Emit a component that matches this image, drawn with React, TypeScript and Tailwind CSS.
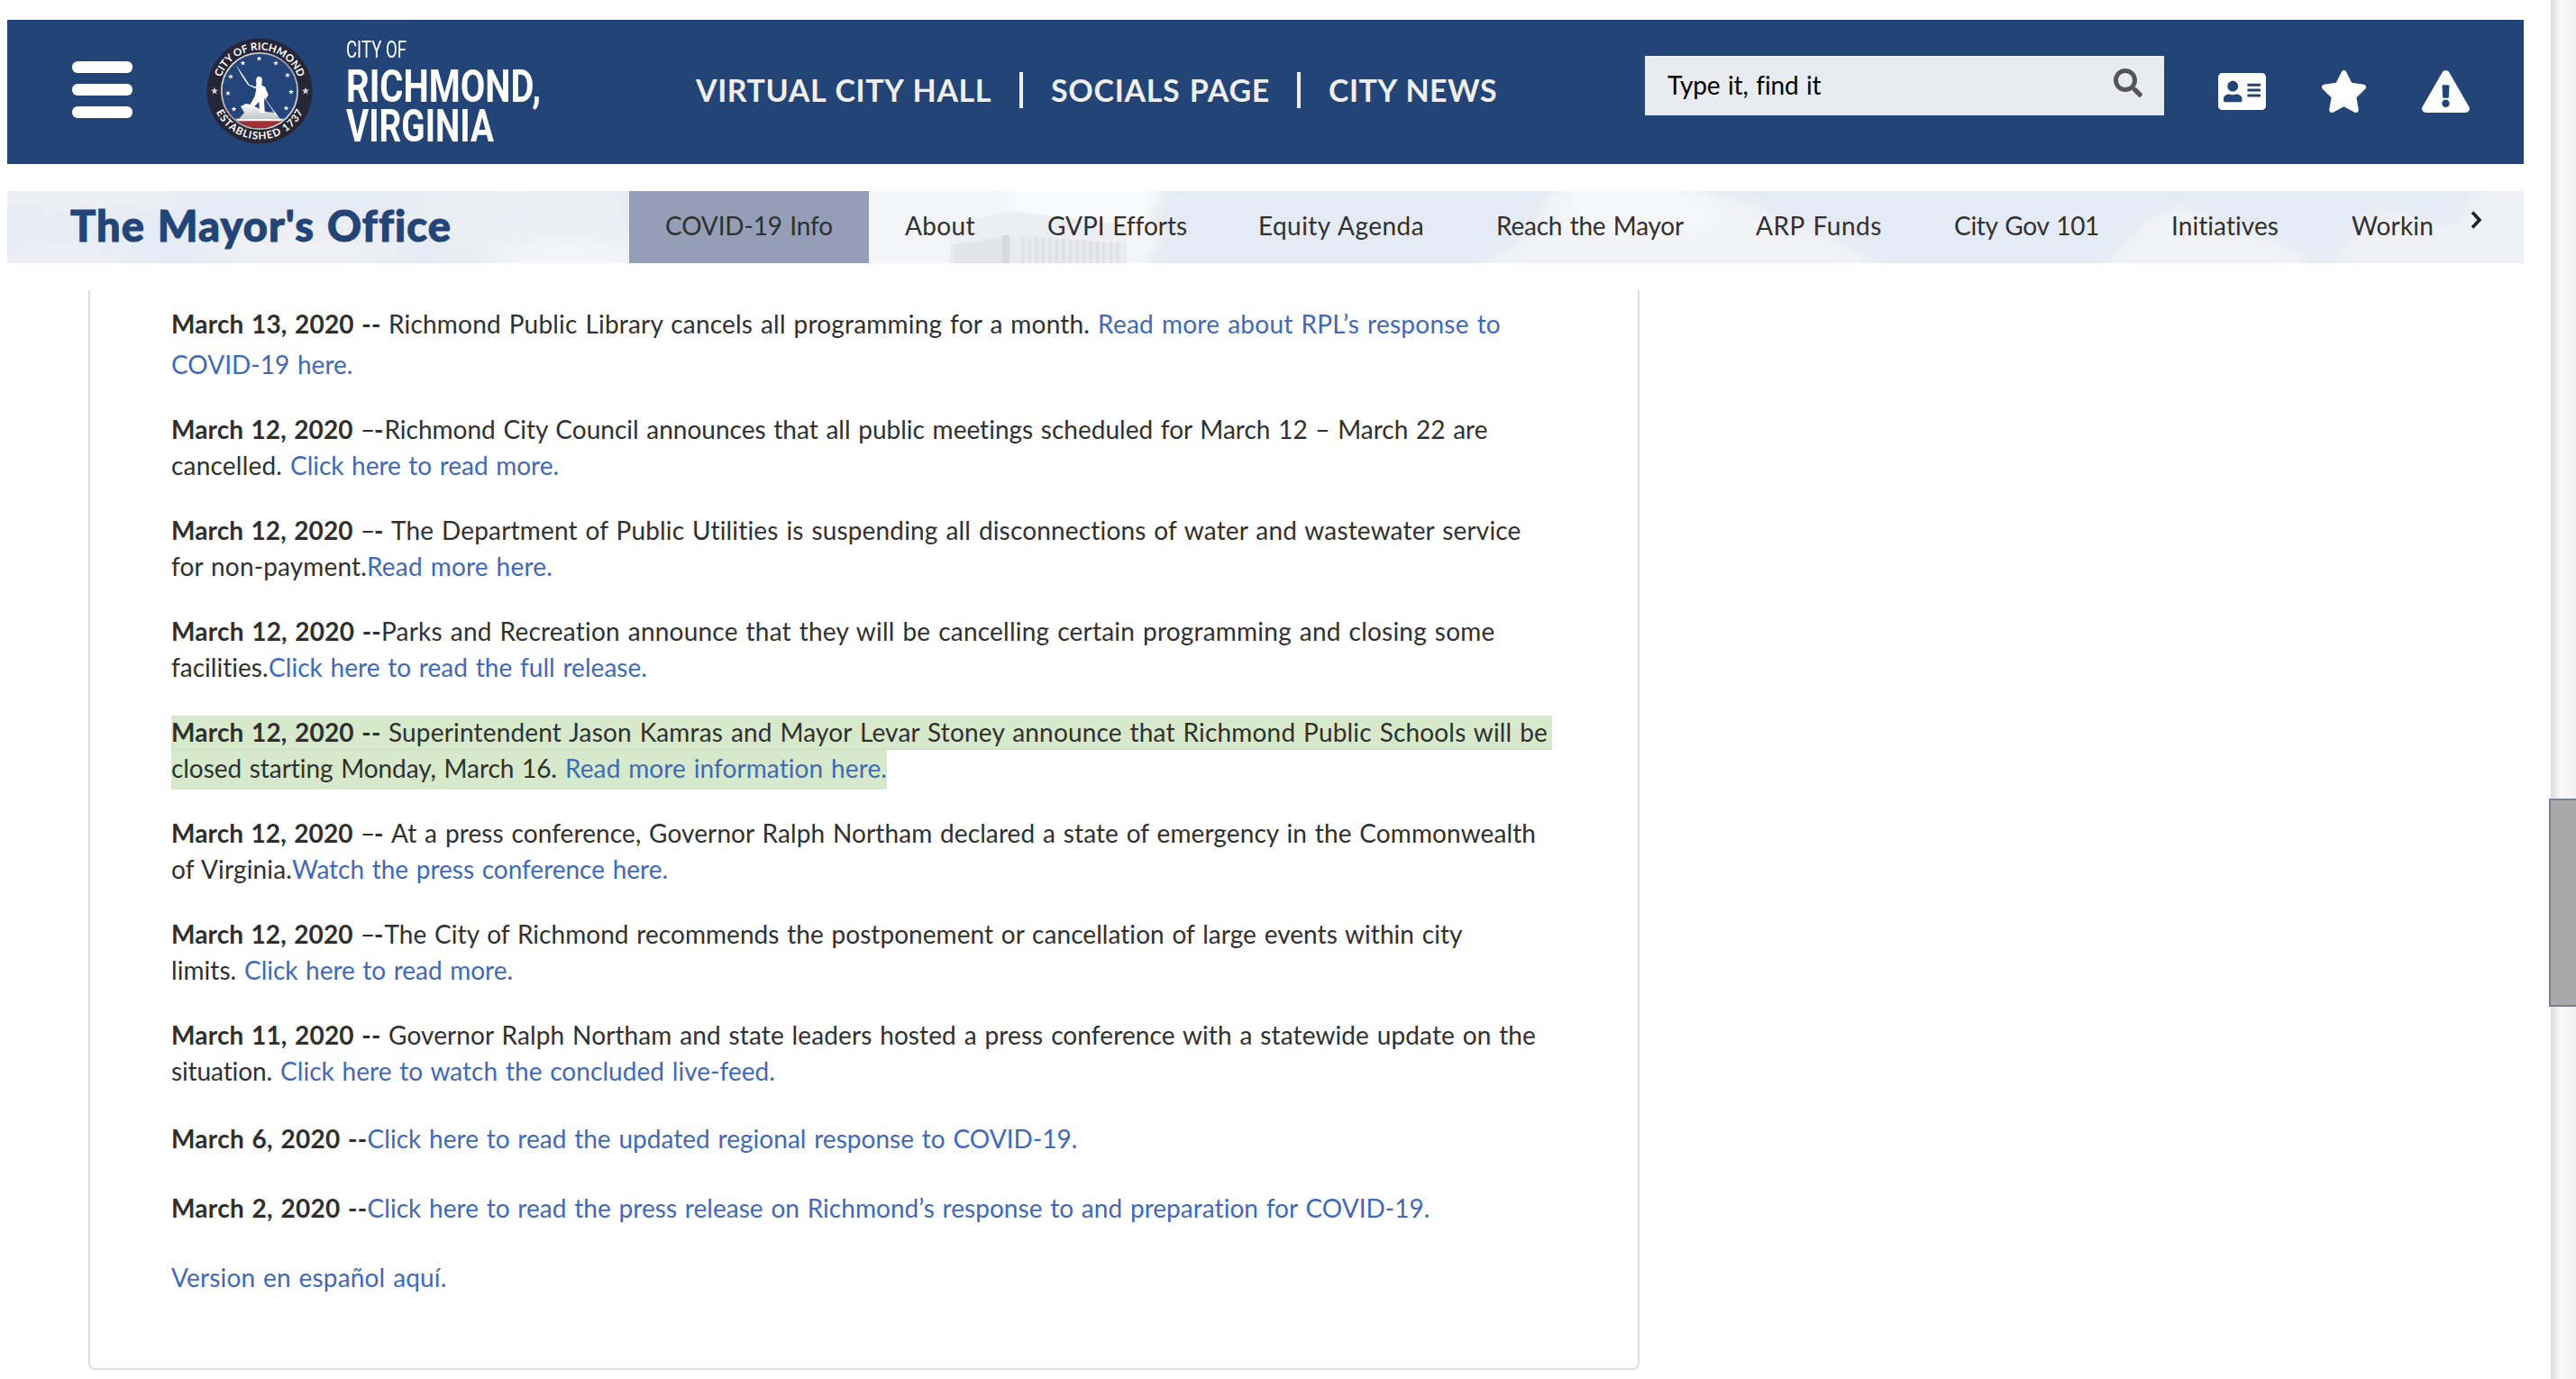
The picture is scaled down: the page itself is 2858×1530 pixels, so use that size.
import { useLayoutEffect, useRef, useState } from "react";
import { FaAddressCard, FaExclamationTriangle, FaSearch, FaStar } from "react-icons/fa";

/** Text tracked so that it fills exactly `w` pixels. */
function Fit({ text, w, className = "" }: { text: string; w: number; className?: string }) {
  const ref = useRef<HTMLSpanElement>(null);
  const [ls, setLs] = useState(0);
  useLayoutEffect(() => {
    const el = ref.current;
    if (!el) return;
    el.style.letterSpacing = "0px";
    setLs((w - el.getBoundingClientRect().width) / text.length);
    el.style.letterSpacing = "";
  }, [text, w]);
  return (
    <span className={`block shrink-0 whitespace-pre ${className}`} style={{ width: w }}>
      <span ref={ref} className="inline-block" style={{ letterSpacing: `${ls}px` }}>
        {text}
      </span>
    </span>
  );
}

/** Condensed lettering: glyphs are squeezed horizontally to `w` pixels. */
function Condensed({ text, w, className = "" }: { text: string; w: number; className?: string }) {
  const ref = useRef<HTMLSpanElement>(null);
  const [sx, setSx] = useState(1);
  useLayoutEffect(() => {
    if (ref.current) setSx(w / ref.current.offsetWidth);
  }, [w]);
  return (
    <span className={`block whitespace-pre ${className}`} style={{ width: w }}>
      <span ref={ref} className="inline-block origin-left" style={{ transform: `scaleX(${sx})` }}>
        {text}
      </span>
    </span>
  );
}

type Kind = "b" | "t" | "a";
type Seg = [Kind, string, number];
type Line = Seg[];

const kindClass: Record<Kind, string> = {
  b: "font-bold text-[#2f2f2f]",
  t: "text-[#303030]",
  a: "text-[#4169b8]",
};

const X0 = 190;

function Row({ line, tall = false }: { line: Line; tall?: boolean }) {
  return (
    <div className={`relative flex ${tall ? "h-[45px] leading-[45px]" : "h-10 leading-10"}`}>
      {line.map(([k, t, end], i) => (
        <Fit key={i} text={t} w={end - (i ? line[i - 1][2] : X0)} className={kindClass[k]} />
      ))}
    </div>
  );
}

const paragraphs: Line[][] = [
  [
    [["b", "March 12, 2020 ", 400], ["t", "–", 415], ["b", "-", 426.5], ["t", "Richmond City Council announces that all public meetings scheduled for March 12 – March 22 are", 1651]],
    [["t", "cancelled. ", 322], ["a", "Click here to read more.", 620]],
  ],
  [
    [["b", "March 12, 2020 ", 400], ["t", "–", 415], ["b", "- ", 434], ["t", "The Department of Public Utilities is suspending all disconnections of water and wastewater service", 1689]],
    [["t", "for non-payment.", 407], ["a", "Read more here.", 613]],
  ],
  [
    [["b", "March 12, 2020 --", 423], ["t", "Parks and Recreation announce that they will be cancelling certain programming and closing some", 1659]],
    [["t", "facilities.", 298], ["a", "Click here to read the full release.", 718]],
  ],
  [
    [["b", "March 12, 2020 -- ", 431], ["t", "Superintendent Jason Kamras and Mayor Levar Stoney announce that Richmond Public Schools will be", 1717]],
    [["t", "closed starting Monday, March 16. ", 627], ["a", "Read more information here.", 984.5]],
  ],
  [
    [["b", "March 12, 2020 ", 400], ["t", "–", 415], ["b", "- ", 434], ["t", "At a press conference, Governor Ralph Northam declared a state of emergency in the Commonwealth", 1704]],
    [["t", "of Virginia.", 324], ["a", "Watch the press conference here.", 741]],
  ],
  [
    [["b", "March 12, 2020 ", 400], ["t", "–", 415], ["b", "-", 426.5], ["t", "The City of Richmond recommends the postponement or cancellation of large events within city", 1623]],
    [["t", "limits. ", 271], ["a", "Click here to read more.", 569]],
  ],
  [
    [["b", "March 11, 2020 -- ", 431], ["t", "Governor Ralph Northam and state leaders hosted a press conference with a statewide update on the", 1704]],
    [["t", "situation. ", 311], ["a", "Click here to watch the concluded live-feed.", 860]],
  ],
];

const singles: Line[] = [
  [["b", "March 6, 2020 --", 407.5], ["a", "Click here to read the updated regional response to COVID-19.", 1195.5]],
  [["b", "March 2, 2020 --", 407.5], ["a", "Click here to read the press release on Richmond’s response to and preparation for COVID-19.", 1587]],
  [["a", "Version en español aquí.", 495.5]],
];

const tabs: [string, number][] = [
  ["COVID-19 Info", 186],
  ["About", 78],
  ["GVPI Efforts", 154],
  ["Equity Agenda", 184],
  ["Reach the Mayor", 208],
  ["ARP Funds", 140],
  ["City Gov 101", 161],
  ["Initiatives", 120],
  ["Workin", 91],
];

const STAR = "M0-1 .235-.324 .951-.309 .38.124 .588.809 0 .4-.588.809-.38.124-.951-.309-.235-.324Z";

const innerStars: [number, number][] = [
  [77.5, 36], [59.5, 41], [96, 41], [46, 56], [109, 54.5], [43, 74.5], [113, 73], [49.5, 92], [107.5, 91],
];

function Seal() {
  return (
    <svg viewBox="19 13 118 118" className="h-[118px] w-[118px] shrink-0">
      <defs>
        <linearGradient id="ring" x1="0" y1="0" x2="1" y2="1">
          <stop offset="0" stopColor="#f4f4f4" />
          <stop offset=".5" stopColor="#9a9a9c" />
          <stop offset="1" stopColor="#e8e8e8" />
        </linearGradient>
        <linearGradient id="rock" x1="0" y1="0" x2="0" y2="1">
          <stop offset="0" stopColor="#ffffff" />
          <stop offset="1" stopColor="#c3c4c8" />
        </linearGradient>
        <clipPath id="disc"><circle cx="78" cy="72" r="41" /></clipPath>
        <path id="topArc" d="M32.5 72a45.5 45.5 0 0 1 91 0" />
        <path id="bottomArc" d="M24.400 72a53.600 53.600 0 0 0 107.200 0" />
      </defs>
      <circle cx="78" cy="72" r="58.5" fill="#262637" />
      <circle cx="78" cy="72" r="42.2" fill="#24457a" stroke="url(#ring)" strokeWidth="1.8" />
      <g clipPath="url(#disc)">
        <path d="M30 105h100v20H30Z" fill="#a03033" />
        <path d="M30 102.800h100v2.400H30Z" fill="#fff" />
      </g>
      <path d="M55 103l6-7-4-7 6-3 5 1 17 8 11 1 2 4-1 3Z" fill="url(#rock)" />
      <path
        d="M51.500 42.500l10 14.500 5 8 7.500 2.500 .5-4c-1-5 0-7.500 3-7.500s4 2.500 3 7l-.3 2.500 4 2 3.500 9-3 4.500 16.500 23-1.200.7L83.500 80l-.5 4 .8 12h-5.500l-1-12-7.500 7.500-3-1 1-4 5-9 1.500-8-9-4-6.500-9.500Z"
        fill="#fff"
      />
      {innerStars.map(([x, y], i) => (
        <path key={i} d={STAR} fill="#fff" transform={`translate(${x} ${y}) scale(3.1)`} />
      ))}
      <path d={STAR} fill="#d5d5d6" transform="translate(28 72) scale(4.3)" />
      <path d={STAR} fill="#d5d5d6" transform="translate(129 72) scale(4.3)" />
      <g fill="#fff" className="font-['Lato'] text-[11.5px] font-bold [word-spacing:0]">
        <text textAnchor="middle" textLength="112">
          <textPath href="#topArc" startOffset="50%">CITY OF RICHMOND</textPath>
        </text>
        <text textAnchor="middle" textLength="120">
          <textPath href="#bottomArc" startOffset="50%">ESTABLISHED 1737</textPath>
        </text>
      </g>
    </svg>
  );
}

function Sky() {
  return (
    <svg viewBox="0 0 2792 80" className="absolute inset-0 h-20 w-full" preserveAspectRatio="none">
      <defs>
        <filter id="soft" x="-20%" y="-60%" width="140%" height="220%"><feGaussianBlur stdDeviation="12" /></filter>
        <filter id="soft2" x="-20%" y="-60%" width="140%" height="220%"><feGaussianBlur stdDeviation="7" /></filter>
        <pattern id="slats" width="7.5" height="80" patternUnits="userSpaceOnUse">
          <path d="M0 0h4v80H0Z" fill="#dfe1e6" />
        </pattern>
      </defs>
      <path d="M0 0h2792v80H0Z" fill="#e5ebf4" />
      <g fill="#eff0f4" filter="url(#soft)">
        <ellipse cx="60" cy="4" rx="150" ry="18" />
        <ellipse cx="570" cy="8" rx="130" ry="22" />
        <ellipse cx="60" cy="84" rx="90" ry="22" />
        <ellipse cx="330" cy="64" rx="110" ry="26" />
        <path d="M420 0h280v80H500Z" fill="#eaedf3" />
        <ellipse cx="620" cy="74" rx="90" ry="22" fill="#f4f5f8" />
      </g>
      <g filter="url(#soft2)">
        <path d="M940-20h350l-20 50 10 25-20 40H940Z" fill="#f3f5f8" />
        <path d="M1110-10h170l-15 40-60 20-90-26Z" fill="#f9fafb" />
        <path d="M1630 90c20-24 50-26 62-50 8-20 16-34 30-54h130c30 20 90 20 120 50 50 10 90 34 110 54Z" fill="#f1f3f6" />
        <path d="M1730-10h120c40 10 60 40 40 50-60 20-120 10-160-10Z" fill="#f5f6f8" />
        <path d="M2325 90c16-30 50-64 82-72 30 0 40 24 60 30 40-4 80 20 96 42Z" fill="#f2f3f7" />
        <path d="M2580 90c10-40 36-66 64-70 30 4 50 30 80 10 6-20 10-40 40-44h60v104Z" fill="#eff1f4" />
      </g>
      <path d="M1046 38l68-16 128 16v42H1046Z" fill="#eceef2" />
      <path d="M1046 60l66-10 130 8v22H1046Z" fill="#e9ebef" />
      <path d="M1122 50l114 8v22h-114Z" fill="url(#slats)" />
      <path d="M1104 49h8v31h-8Z" fill="#d7d9de" />
      <path d="M1050 60l54-9v29h-54Z" fill="#e2e4e9" />
    </svg>
  );
}

export default function App() {
  return (
    <div className="flex h-[1530px] w-[2858px] justify-between overflow-hidden bg-white font-['Lato','Noto_Sans',sans-serif] text-[28px] [word-spacing:1.5px]">
      <div className="flex w-[2800px] flex-col pl-2 pt-[22px]">
        <header className="flex h-40 shrink-0 bg-[#234477]">
          <div className="ml-[72px] mt-[46px] flex w-[67px] shrink-0 flex-col gap-3">
            <span className="h-[13px] rounded-md bg-white" />
            <span className="h-[13px] rounded-md bg-white" />
            <span className="h-[13px] rounded-md bg-white" />
          </div>
          <div className="ml-[82px] mt-5 shrink-0"><Seal /></div>
          <div className="ml-[37px] mt-[19px] w-[350px] shrink-0 font-['Roboto'] text-white [word-spacing:0]">
            <Condensed text="CITY OF" w={67} className="h-[30px] text-[25px] leading-[30px]" />
            <Condensed text="RICHMOND," w={216} className="mt-[3px] h-[44px] text-[50px] font-bold leading-[44px]" />
            <Condensed text="VIRGINIA" w={164} className="h-[44px] text-[50px] font-bold leading-[44px]" />
          </div>
          <nav className="mt-[58px] flex h-10 w-[1091px] shrink-0 items-center pl-[38px] text-[34px] font-bold leading-10 text-[#efefef]">
            <Fit text="VIRTUAL CITY HALL" w={328} />
            <span className="mx-[31px] h-10 w-1 shrink-0 bg-[#efefef]" />
            <Fit text="SOCIALS PAGE" w={243} />
            <span className="ml-[30px] mr-[31px] h-10 w-1 shrink-0 bg-[#efefef]" />
            <Fit text="CITY NEWS" w={187} />
          </nav>
          <div className="mt-10 flex h-[66px] w-[576px] shrink-0 items-center bg-[#e8ebef] pl-[25px]">
            <Fit text="Type it, find it" w={170} className="-mt-0.5 text-black" />
            <FaSearch className="-mt-1.5 ml-[325px] size-8 text-[#555555]" />
          </div>
          <div className="ml-[60px] mt-14 flex h-[47px] items-center gap-[60px] text-white">
            <FaAddressCard className="h-[47px] w-[53px]" />
            <FaStar className="h-[47px] w-[53px]" />
            <FaExclamationTriangle className="h-[47px] w-[53px]" />
          </div>
        </header>

        <div className="relative mt-[30px] flex h-20 shrink-0">
          <Sky />
          <h1 className="relative w-[690px] shrink-0 pl-[70px] text-[47px] font-black leading-[77px] text-[#234477] [-webkit-text-stroke:1px_#234477]">
            <Fit text="The Mayor's Office" w={421} />
          </h1>
          <ul className="relative flex">
            {tabs.map(([t, w], i) => (
              <li key={t} className={`h-20 px-10 leading-[76px] text-[#303030] ${i === 0 ? "bg-[#949fb7]" : ""}`}>
                <Fit text={t} w={w} />
              </li>
            ))}
          </ul>
          <svg viewBox="0 0 13 20" className="relative mt-[22px] ml-px h-5 w-[13px]" fill="none" stroke="#222" strokeWidth="3.6">
            <path d="M2 1.500 10 10 2 18.500" />
          </svg>
        </div>

        <main className="ml-[90px] mt-[30px] flex h-[1198px] w-[1721px] shrink-0 flex-col rounded-b-lg border-2 border-t-0 border-[#dcdee0] pl-[90px]">
          <div className="mt-[15px] flex flex-col">
            <Row tall line={[["b", "March 13, 2020 -- ", 431], ["t", "Richmond Public Library cancels all programming for a month. ", 1218], ["a", "Read more about RPL’s response to", 1665]]} />
            <Row tall line={[["a", "COVID-19 here.", 391.5]]} />
          </div>
          <div className="mt-[29px] flex flex-col gap-8">
            {paragraphs.map((p, i) => (
              <div key={i} className="relative">
                {i === 3 && (
                  <div className="absolute left-0 top-0.5 flex w-[1532px] flex-col">
                    <div className="h-[38px] border-b border-[#c8dcb8] bg-[#d6e9cb]" />
                    <div className="h-11 w-[794px] bg-[#d6e9cb]" />
                  </div>
                )}
                {p.map((l, j) => <Row key={j} line={l} />)}
              </div>
            ))}
          </div>
          <div className="mt-[33px] flex flex-col gap-8">
            {singles.map((l, i) => <Row key={i} tall line={l} />)}
          </div>
        </main>
      </div>

      <div className="flex h-full w-[30px] flex-col items-end">
        <div className="h-[886px] w-7 bg-linear-to-r from-[#dcdcdc] via-[#fbfbfb] via-40% to-[#f0f0f0]" />
        <div className="h-[231px] w-[30px] border-2 border-r-0 border-[#738295] bg-[#a9a9a9]" />
        <div className="w-7 flex-1 bg-linear-to-r from-[#dcdcdc] via-[#fbfbfb] via-40% to-[#f0f0f0]" />
      </div>
    </div>
  );
}
